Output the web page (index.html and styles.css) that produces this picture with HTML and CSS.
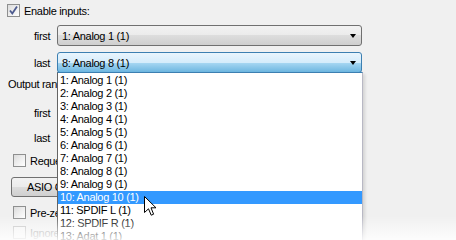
FILE: index.html
```html
<!DOCTYPE html>
<html lang="en">
<head>
    <meta charset="UTF-8">
    <title>Input settings</title>
    <link rel="stylesheet" href="styles.css">
</head>
<body>
    <div class="panel">
        <div class="check enable">
            <span class="box">
                <svg width="11" height="11" viewBox="0 0 11 11"><path d="M2 5.5 L4.3 8.5 L9 1.5" fill="none" stroke="#4d5b8f" stroke-width="1.8"/></svg>
            </span>
            Enable inputs:
        </div>
        <div class="field">
            <span class="lbl">first</span>
            <div class="combo">1: Analog 1 (1)<span class="arrow"></span></div>
        </div>
        <div class="field">
            <span class="lbl">last</span>
            <div class="combo focus">8: Analog 8 (1)<span class="arrow"></span></div>
        </div>
        <div class="caption">Output range:</div>
        <div class="field">
            <span class="lbl">first</span>
            <div class="combo"><span class="arrow"></span></div>
        </div>
        <div class="field">
            <span class="lbl">last</span>
            <div class="combo"><span class="arrow"></span></div>
        </div>
        <div class="check sub req"><span class="box"></span>Request</div>
        <button class="btn">ASIO Config</button>
        <div class="check sub pre"><span class="box"></span>Pre-zero</div>
        <div class="check sub ign disabled"><span class="box"></span>Ignore</div>
    </div>

    <ul class="dropdown">
        <li>1: Analog 1 (1)</li>
        <li>2: Analog 2 (1)</li>
        <li>3: Analog 3 (1)</li>
        <li>4: Analog 4 (1)</li>
        <li>5: Analog 5 (1)</li>
        <li>6: Analog 6 (1)</li>
        <li>7: Analog 7 (1)</li>
        <li>8: Analog 8 (1)</li>
        <li>9: Analog 9 (1)</li>
        <li class="hot">10: Analog 10 (1)</li>
        <li>11: SPDIF L (1)</li>
        <li>12: SPDIF R (1)</li>
        <li>13: Adat 1 (1)</li>
    </ul>

    <svg class="cursor" width="13" height="21" viewBox="0 0 13 21">
        <path d="M0.5 0.5 L0.5 16.5 L4.5 12.8 L7.2 19.2 L9.6 18.2 L7 11.8 L12 11.8 Z" fill="#fff" stroke="#000" stroke-width="1"/>
    </svg>

    <div class="fade"></div>
</body>
</html>
```

FILE: styles.css
```css
* {
    margin: 0;
    padding: 0;
    box-sizing: border-box;
}

html {
    overflow: hidden;
}

body {
    width: 456px;
    height: 240px;
    overflow: hidden;
    position: relative;
    background: #f0f0f0;
    font-family: "Liberation Sans", Arial, sans-serif;
    font-size: 11px;
    letter-spacing: -0.3px;
    color: #000;
}

.panel {
    padding-top: 4px;
}

.check {
    display: flex;
    align-items: center;
    height: 13px;
}

.box {
    width: 13px;
    height: 13px;
    border: 1px solid #8e8f8f;
    background: linear-gradient(135deg, #dcdcdc, #ffffff);
    margin-right: 4px;
    display: flex;
    align-items: center;
    justify-content: center;
}

.enable {
    margin-left: 7px;
    margin-bottom: 8px;
}

.field {
    display: flex;
    align-items: center;
    height: 21px;
    margin-bottom: 6px;
}

.lbl {
    width: 23px;
    margin-left: 34px;
}

.combo {
    width: 305px;
    height: 21px;
    border: 1px solid #707070;
    border-radius: 3px;
    background: linear-gradient(#f2f2f2, #ebebeb 50%, #dddddd 50%, #cfcfcf);
    display: flex;
    align-items: center;
    padding-left: 4px;
}

.combo.focus {
    border-color: #3c7fb1;
    background: linear-gradient(#e9f5fd, #d5ecfb 50%, #a9d8f3 50%, #6db6e0);
}

.arrow {
    margin-left: auto;
    margin-right: 5px;
    width: 0;
    height: 0;
    border-left: 3.5px solid transparent;
    border-right: 3.5px solid transparent;
    border-top: 4px solid #000;
    margin-top: 1px;
}

.caption {
    margin-left: 8px;
    height: 13px;
    line-height: 13px;
    margin-top: -1px;
    margin-bottom: 11px;
}

.field + .field + .caption + .field {
    margin-bottom: 4px;
}

.sub {
    margin-left: 13px;
}

.req {
    margin-top: 6px;
}

.btn {
    display: block;
    margin: 10px 0 9px 11px;
    width: 90px;
    height: 20px;
    border: 1px solid #707070;
    border-radius: 3px;
    background: linear-gradient(#f2f2f2, #ebebeb 50%, #dddddd 50%, #cfcfcf);
    font: inherit;
    letter-spacing: inherit;
    text-align: left;
    padding-left: 15px;
}

.pre {
    margin-bottom: 7px;
}

.disabled {
    color: #a0a0a0;
}

.disabled .box {
    border-color: #c0c0c0;
    background: #f4f4f4;
}

.dropdown {
    position: absolute;
    left: 57px;
    top: 72px;
    width: 306px;
    height: 172px;
    overflow: hidden;
    list-style: none;
    background: #fff;
    border: 1px solid #646464;
    border-top-color: #3c7fb1;
    border-right-color: #b8b8c4;
    border-bottom: none;
    box-shadow: 2px 2px 3px rgba(0, 0, 0, 0.12);
    padding-top: 1px;
}

.dropdown li {
    height: 13px;
    line-height: 13px;
    padding-left: 2px;
}

.dropdown li.hot {
    background: #3399ff;
    color: #fff;
}

.cursor {
    position: absolute;
    left: 144px;
    top: 196px;
}

.fade {
    position: absolute;
    left: 0;
    right: 0;
    bottom: 0;
    height: 24px;
    background: linear-gradient(rgba(255, 255, 255, 0), rgba(255, 255, 255, 0.85));
}
```
